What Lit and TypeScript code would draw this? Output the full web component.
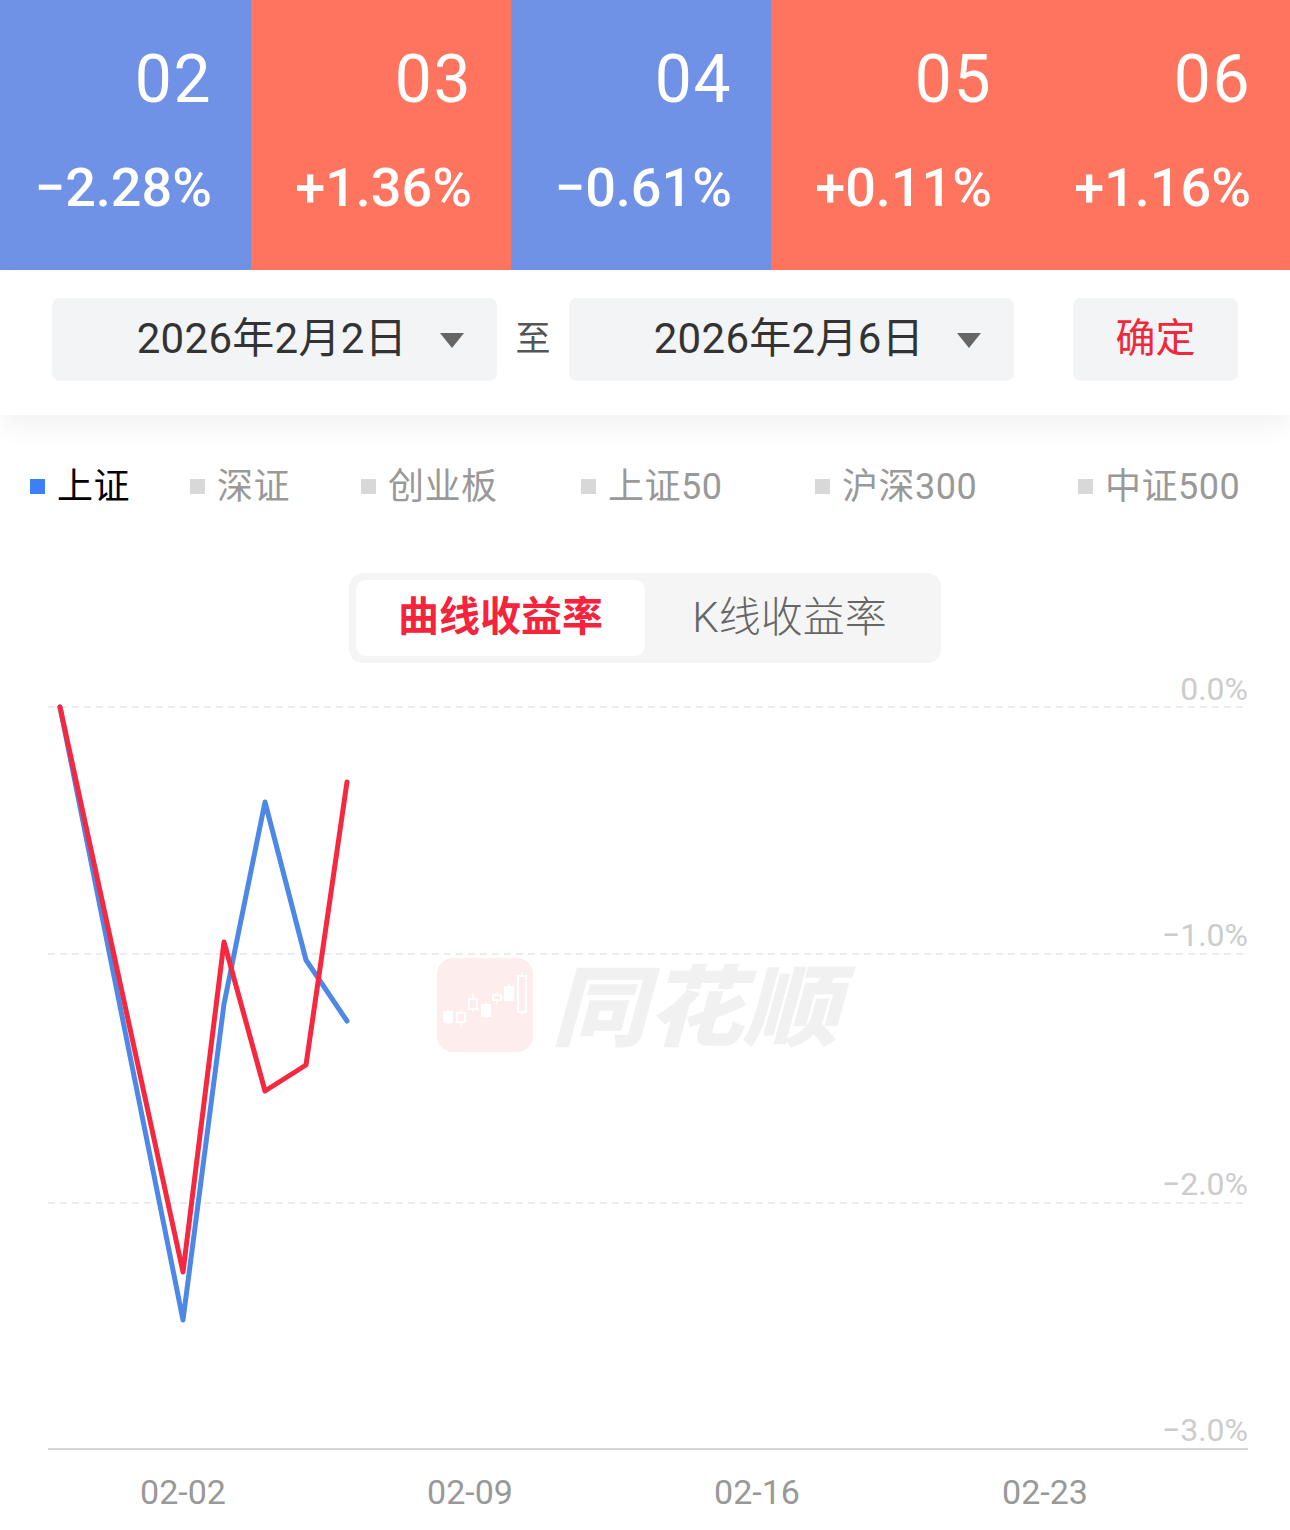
import { LitElement, html, svg, css } from 'lit';
import { customElement } from 'lit/decorators.js';

const days = [
  { day: '02', pct: '−2.28%', up: false },
  { day: '03', pct: '+1.36%', up: true },
  { day: '04', pct: '−0.61%', up: false },
  { day: '05', pct: '+0.11%', up: true },
  { day: '06', pct: '+1.16%', up: true },
];

const legend = ['上证', '深证', '创业板', '上证50', '沪深300', '中证500'];

// chart coords, svg origin sits at y=663 of the page
const top = 663;
const gridY = [707, 954, 1203];
const yLabels = [
  { t: '0.0%', y: 689 },
  { t: '−1.0%', y: 935 },
  { t: '−2.0%', y: 1184 },
  { t: '−3.0%', y: 1430 },
];
const xLabels = [
  { t: '02-02', x: 183 },
  { t: '02-09', x: 470 },
  { t: '02-16', x: 757 },
  { t: '02-23', x: 1045 },
];
const blue = [[60, 707], [183, 1320], [224, 1004], [265, 802], [306, 960], [347, 1021]];
const red = [[60, 707], [183, 1272], [224, 942], [265, 1091], [306, 1065], [347, 782]];

const pts = (list: number[][]) => list.map(([x, y]) => `${x},${y - top}`).join(' ');

// little candlesticks in the watermark logo: x, body top, body bottom, wick top, wick bottom, filled
const candles = [
  [448, 1012, 1022, 1009, 1024, 1],
  [461, 1013, 1022, 1010, 1027, 0],
  [473, 999, 1009, 994, 1012, 0],
  [486, 1005, 1016, 1002, 1018, 1],
  [497, 995, 1000, 992, 1005, 0],
  [509, 987, 1000, 984, 1002, 1],
  [522, 976, 1012, 972, 1015, 0],
];

@customElement('app-root')
export class AppRoot extends LitElement {
  static styles = css`
    :host {
      display: block;
      width: 1290px;
      height: 1530px;
      overflow: hidden;
      background: #fff;
      font-family: Roboto, 'Noto Sans CJK SC', sans-serif;
    }
    .days {
      display: grid;
      grid-template-columns: 251px 260px 260px 260px 259px;
      height: 270px;
    }
    .day {
      display: flex;
      flex-direction: column;
      align-items: flex-end;
      padding: 41px 39px 0 0;
      color: #fff;
      background: #7092e6;
    }
    .day.up {
      background: #ff745e;
    }
    .day .num {
      font-size: 66px;
      line-height: 78px;
      letter-spacing: 1.5px;
    }
    .day .pct {
      font-size: 54px;
      line-height: 64px;
      margin-top: 37px;
      font-weight: 500;
    }
    .range {
      position: relative;
      display: flex;
      align-items: center;
      height: 145px;
      padding: 0 52px 6px;
      box-sizing: border-box;
      background: #fff;
      box-shadow: 0 12px 24px rgba(0, 0, 0, 0.05);
    }
    .select {
      display: flex;
      align-items: center;
      justify-content: flex-end;
      width: 445px;
      height: 83px;
      padding-right: 33px;
      box-sizing: border-box;
      background: #f3f4f6;
      border-radius: 8px;
      color: #333;
      font-size: 42px;
    }
    .select .label {
      margin-bottom: 10px;
      letter-spacing: 0.3px;
    }
    .arrow {
      width: 0;
      height: 0;
      margin: 2px 0 0 33px;
      border-left: 12px solid transparent;
      border-right: 12px solid transparent;
      border-top: 15px solid #666;
    }
    .to {
      width: 72px;
      text-align: center;
      font-size: 35px;
      color: #555;
      margin-top: -8px;
    }
    .ok {
      display: flex;
      align-items: center;
      justify-content: center;
      width: 165px;
      height: 83px;
      padding-bottom: 10px;
      box-sizing: border-box;
      margin-left: 59px;
      background: #f3f4f6;
      border-radius: 8px;
      color: #f0283c;
      font-size: 40px;
    }
    .legend {
      display: grid;
      grid-template-columns: 160px 171px 220px 234px 263px auto;
      align-items: center;
      height: 50px;
      margin-top: 42px;
      padding-left: 30px;
      color: #999;
      font-size: 36px;
      letter-spacing: 0.5px;
    }
    .legend .item {
      display: flex;
      align-items: center;
      gap: 12px;
      white-space: nowrap;
    }
    .legend .name {
      margin-bottom: 6px;
    }
    .legend .dot {
      width: 15px;
      height: 15px;
      background: #d8d8d8;
    }
    .legend .on {
      color: #000;
    }
    .legend .on .dot {
      background: #3f7ff5;
    }
    .tabs {
      display: flex;
      width: 592px;
      height: 90px;
      margin: 66px 0 0 349px;
      padding: 7px;
      box-sizing: border-box;
      background: #f5f5f5;
      border-radius: 14px;
      font-size: 42px;
      font-weight: 300;
      color: #666;
    }
    .tab {
      display: flex;
      align-items: center;
      justify-content: center;
      width: 289px;
      padding-bottom: 10px;
      box-sizing: border-box;
    }
    .tab.on {
      background: #fff;
      border-radius: 10px;
      color: #f5233b;
      font-size: 41px;
      font-weight: 700;
    }
    .chart {
      display: block;
    }
    .chart text {
      font-family: Roboto, 'Noto Sans CJK SC', sans-serif;
    }
    .grid {
      stroke: #e6e6e6;
      stroke-width: 1.5;
      stroke-dasharray: 7 5;
    }
    .axis {
      stroke: #d6d6d6;
      stroke-width: 2;
    }
    .ylab {
      font-size: 32px;
      fill: #cccccc;
      text-anchor: end;
      dominant-baseline: central;
    }
    .xlab {
      font-size: 34px;
      fill: #999;
      text-anchor: middle;
      dominant-baseline: central;
    }
    .line {
      fill: none;
      stroke-width: 5;
      stroke-linejoin: round;
      stroke-linecap: round;
    }
    .line.blue {
      stroke: #4d88e6;
    }
    .line.red {
      stroke: #f5283f;
    }
    .mark-bg {
      fill: #fdeded;
    }
    .mark-stick {
      stroke: #fff;
      stroke-width: 1.5;
    }
    .mark-word {
      font-size: 88px;
      font-weight: 900;
      font-style: italic;
      fill: #f1f1f1;
    }
  `;

  renderWatermark() {
    return svg`
      <rect class="mark-bg" x="437" y=${958 - top} width="96" height="94" rx="16"></rect>
      ${candles.map(
        ([x, a, b, c, d, fill]) => svg`
          <line class="mark-stick" x1=${x} x2=${x} y1=${c - top} y2=${d - top}></line>
          <rect x=${x - 4} y=${a - top} width="8" height=${b - a}
            fill=${fill ? '#fff' : '#fdeded'} stroke="#fff" stroke-width="2"></rect>
        `
      )}
      <text class="mark-word" x="551" y=${1039 - top} textLength="288" lengthAdjust="spacingAndGlyphs">同花顺</text>
    `;
  }

  render() {
    return html`
      <div class="days">
        ${days.map(
          (d) => html`
            <div class="day ${d.up ? 'up' : ''}">
              <div class="num">${d.day}</div>
              <div class="pct">${d.pct}</div>
            </div>
          `
        )}
      </div>
      <div class="range">
        <div class="select"><span class="label">2026年2月2日</span><span class="arrow"></span></div>
        <div class="to">至</div>
        <div class="select"><span class="label">2026年2月6日</span><span class="arrow"></span></div>
        <div class="ok">确定</div>
      </div>
      <div class="legend">
        ${legend.map(
          (name, i) => html`
            <div class="item ${i === 0 ? 'on' : ''}"><span class="dot"></span><span class="name">${name}</span></div>
          `
        )}
      </div>
      <div class="tabs">
        <div class="tab on">曲线收益率</div>
        <div class="tab">K线收益率</div>
      </div>
      <svg class="chart" width="1290" height=${1530 - top} viewBox="0 0 1290 ${1530 - top}">
        ${gridY.map(
          (y) => svg`<line class="grid" x1="48" x2="1248" y1=${y - top} y2=${y - top}></line>`
        )}
        <line class="axis" x1="48" x2="1248" y1=${1449 - top} y2=${1449 - top}></line>
        ${this.renderWatermark()}
        ${yLabels.map((l) => svg`<text class="ylab" x="1248" y=${l.y - top}>${l.t}</text>`)}
        ${xLabels.map((l) => svg`<text class="xlab" x=${l.x} y=${1492 - top}>${l.t}</text>`)}
        <polyline class="line blue" points=${pts(blue)}></polyline>
        <polyline class="line red" points=${pts(red)}></polyline>
      </svg>
    `;
  }
}
